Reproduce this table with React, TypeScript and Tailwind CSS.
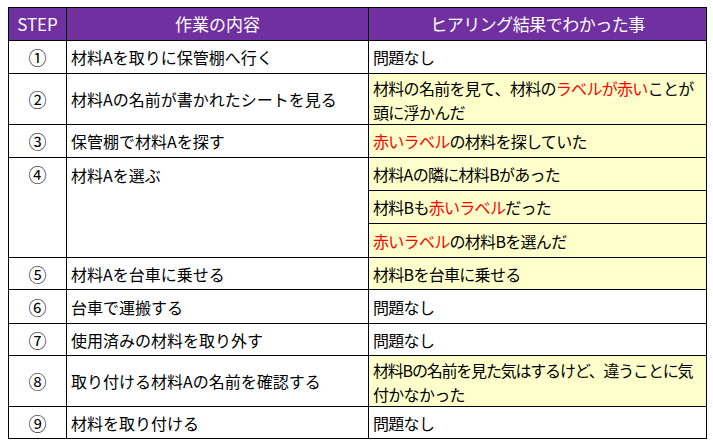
import React from "react";

const R = ({ children }: { children: React.ReactNode }) => (
  <span className="text-[#ff0000]">{children}</span>
);

const td = "border border-black px-[4px] align-middle whitespace-nowrap";
const c3 = "border border-black pl-[4px] pr-0 align-middle whitespace-nowrap tracking-[-0.7px] overflow-hidden";
const num = "border border-black text-center align-middle text-[18px]";

export default function App() {
  return (
    <div
      className="w-[713px] h-[443px] bg-white pt-[7px] pl-[8px] text-[16px] text-black"
      style={{ fontFamily: '"Noto Sans CJK JP", "Noto Sans", sans-serif' }}
    >
      <table className="border-collapse table-fixed w-[698px] leading-[24px]">
        <colgroup>
          <col className="w-[58px]" />
          <col className="w-[302px]" />
          <col className="w-[338px]" />
        </colgroup>
        <tbody>
          <tr className="h-[33px] bg-[#7030a0] text-white text-[17px]">
            <td className="border border-black text-center align-middle">STEP</td>
            <td className="border border-black text-center align-middle">作業の内容</td>
            <td className="border border-black text-center align-middle tracking-[-0.5px]">ヒアリング結果でわかった事</td>
          </tr>
          <tr className="h-[33px]">
            <td className={num}>①</td>
            <td className={td}>材料Aを取りに保管棚へ行く</td>
            <td className={c3}>問題なし</td>
          </tr>
          <tr className="h-[50px]">
            <td className={num}>②</td>
            <td className={td}>材料Aの名前が書かれたシートを見る</td>
            <td className={`${c3} bg-[#ffffcc] pt-[2px]`}>
              材料の名前を見て、材料の<R>ラベルが赤い</R>ことが
              <br />
              頭に浮かんだ
            </td>
          </tr>
          <tr className="h-[33px]">
            <td className={num}>③</td>
            <td className={td}>保管棚で材料Aを探す</td>
            <td className={`${c3} bg-[#ffffcc]`}>
              <R>赤いラベル</R>の材料を探していた
            </td>
          </tr>
          <tr className="h-[33px]">
            <td rowSpan={3} className="border border-black text-center align-top pt-[4px] text-[18px]">④</td>
            <td rowSpan={3} className="border border-black px-[4px] align-top pt-[5px]">材料Aを選ぶ</td>
            <td className={`${c3} bg-[#ffffcc]`}>材料Aの隣に材料Bがあった</td>
          </tr>
          <tr className="h-[33px]">
            <td className={`${c3} bg-[#ffffcc]`}>
              材料Bも<R>赤いラベル</R>だった
            </td>
          </tr>
          <tr className="h-[34px]">
            <td className={`${c3} bg-[#ffffcc]`}>
              <R>赤いラベル</R>の材料Bを選んだ
            </td>
          </tr>
          <tr className="h-[32px]">
            <td className={num}>⑤</td>
            <td className={td}>材料Aを台車に乗せる</td>
            <td className={`${c3} bg-[#ffffcc]`}>材料Bを台車に乗せる</td>
          </tr>
          <tr className="h-[34px]">
            <td className={num}>⑥</td>
            <td className={td}>台車で運搬する</td>
            <td className={c3}>問題なし</td>
          </tr>
          <tr className="h-[32px]">
            <td className={num}>⑦</td>
            <td className={td}>使用済みの材料を取り外す</td>
            <td className={c3}>問題なし</td>
          </tr>
          <tr className="h-[51px]">
            <td className={num}>⑧</td>
            <td className={td}>取り付ける材料Aの名前を確認する</td>
            <td className={`${c3} bg-[#ffffcc] pt-[2px]`}>
              <span className="tracking-[-1.2px]">材料Bの名前を見た気はするけど、違うことに気</span>
              <br />
              付かなかった
            </td>
          </tr>
          <tr className="h-[32px]">
            <td className={num}>⑨</td>
            <td className={td}>材料を取り付ける</td>
            <td className={c3}>問題なし</td>
          </tr>
        </tbody>
      </table>
    </div>
  );
}
